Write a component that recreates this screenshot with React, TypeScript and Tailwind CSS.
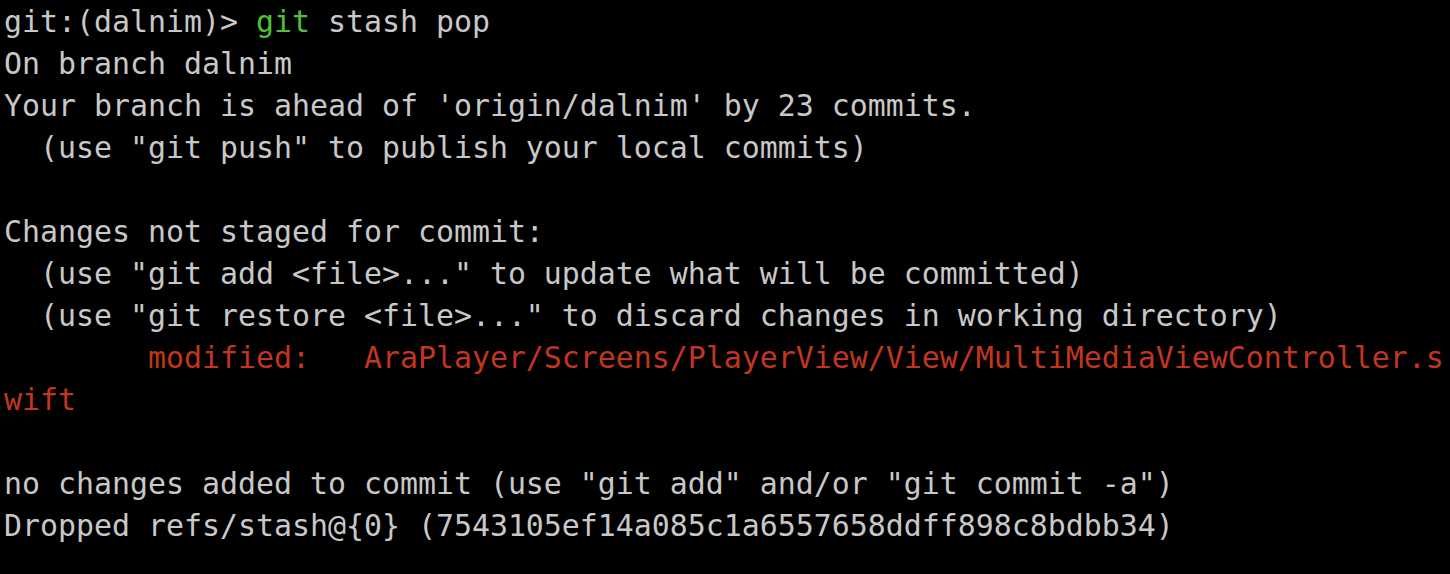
import React from "react";

const G = "text-[#c8c8c8]";
const R = "text-[#c2361f]";

export default function App() {
  const lines: React.ReactNode[] = [
    <>
      git:(dalnim)&gt; <span className="text-[#4dc236]">git</span> stash pop
    </>,
    "On branch dalnim",
    "Your branch is ahead of 'origin/dalnim' by 23 commits.",
    '  (use "git push" to publish your local commits)',
    "",
    "Changes not staged for commit:",
    '  (use "git add <file>..." to update what will be committed)',
    '  (use "git restore <file>..." to discard changes in working directory)',
    <span className={R}>{"        modified:   AraPlayer/Screens/PlayerView/View/MultiMediaViewController.s"}</span>,
    <span className={R}>wift</span>,
    "",
    'no changes added to commit (use "git add" and/or "git commit -a")',
    "Dropped refs/stash@{0} (7543105ef14a085c1a6557658ddff898c8bdbb34)",
  ];
  return (
    <div
      className={`min-h-screen w-full bg-black pl-[4px] pt-[1px] ${G} text-[29.9px] leading-[42px] whitespace-pre`}
      style={{ fontFamily: '"DejaVu Sans Mono", "Liberation Mono", monospace' }}
    >
      {lines.map((l, i) => (
        <div key={i} className="h-[42px]">
          {l}
        </div>
      ))}
    </div>
  );
}
